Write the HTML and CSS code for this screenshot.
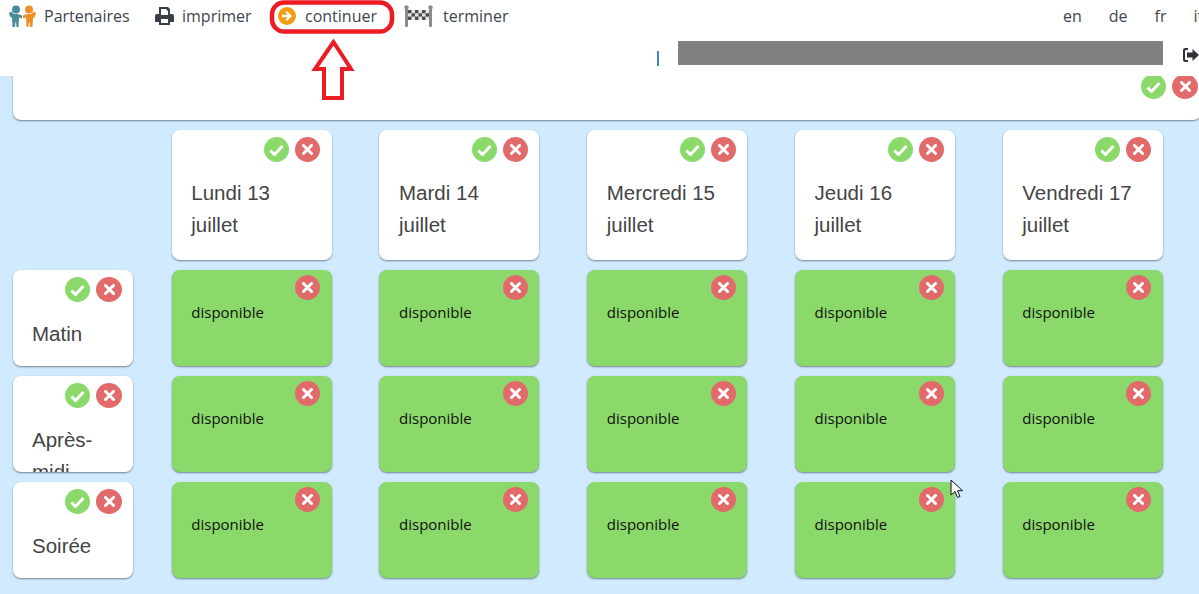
FILE: index.html
```html
<!DOCTYPE html>
<html lang="fr">
<head>
<meta charset="utf-8">
<title>Planning</title>
<link rel="stylesheet" href="styles.css">
</head>
<body>
<header class="top">
  <div class="nav-row">
    <nav class="nav">
      <a class="nav-item partners"><svg class="ico" width="27" height="22" viewBox="0 0 27 22"><g fill="#4a8d9a"><circle cx="7" cy="4.500" r="4"/><path d="M0 8l2-1.500 3 2.500h4l4 1.500v3l-3-1-.5 9.500H7.500L7 17H6.500l-.5 5H3.500L3 13 1 11.500z"/></g><g fill="#ee8f27"><circle cx="20" cy="4.500" r="4"/><path d="M27 8l-2-1.500-3 2.500h-4l-4 1.500v3l3-1 .5 9.500h2l.5-5h.5l.5 5h2.500l.5-9 2-1.500z"/></g></svg><span>Partenaires</span></a>
      <a class="nav-item print"><svg class="ico" width="19" height="18" viewBox="0 0 19 18"><path fill="#3a3f47" d="M4 0h9l2 2v5h2a2 2 0 0 1 2 2v5a1 1 0 0 1-1 1h-3v3H4v-3H1a1 1 0 0 1-1-1V9a2 2 0 0 1 2-2h2zm2 2v6h7V3.500h-1.500V2zm0 10v4h7v-4z"/></svg><span>imprimer</span></a>
      <a class="nav-item next"><svg class="ico" width="18" height="18" viewBox="0 0 18 18"><circle cx="9" cy="9" r="9" fill="#f39c12"/><path fill="#fff" d="M9 4l5 5-5 5-1.500-1.500L9.500 10.300H4V7.700h5.500L7.500 5.500z"/></svg><span>continuer</span></a>
      <a class="nav-item finish"><svg class="ico" width="29" height="22" viewBox="0 0 29 22"><g fill="#8a8a8a"><rect x="1" y="2" width="3" height="20" rx="1"/><rect x="25" y="2" width="3" height="20" rx="1"/><circle cx="2.500" cy="2.500" r="2.200"/><circle cx="26.500" cy="2.500" r="2.200"/></g><rect x="4" y="5" width="21" height="10" fill="#e6e6e6"/><g fill="#4a4a4a"><rect x="4" y="5" width="3.500" height="3.300"/><rect x="11" y="5" width="3.500" height="3.300"/><rect x="18" y="5" width="3.500" height="3.300"/><rect x="7.500" y="8.300" width="3.500" height="3.300"/><rect x="14.500" y="8.300" width="3.500" height="3.300"/><rect x="21.500" y="8.300" width="3.500" height="3.300"/><rect x="4" y="11.600" width="3.500" height="3.300"/><rect x="11" y="11.600" width="3.500" height="3.300"/><rect x="18" y="11.600" width="3.500" height="3.300"/></g></svg><span>terminer</span></a>
    </nav>
    <div class="langs"><a>en</a><a>de</a><a>fr</a><a>it</a></div>
  </div>
  <div class="user-row">
    <span class="sep"></span>
    <span class="redacted"></span>
    <svg class="logout" width="16" height="14" viewBox="0 0 16 14"><path fill="#2f3338" d="M5 0v2H3a1 1 0 0 0-1 1v8a1 1 0 0 0 1 1h2v2H2.500A2.500 2.500 0 0 1 0 11.500v-9A2.500 2.500 0 0 1 2.500 0z"/><path fill="#2f3338" d="M9.500 1L16 7l-6.500 6V9.500H4v-5h5.500z"/></svg>
  </div>
</header>

<main class="board">
  <section class="banner">
    <div class="actions"><button class="btn ok"><svg width="15" height="12" viewBox="0 0 15 12"><path d="M1.500 6.500l4 4 8-8.500" fill="none" stroke="#fff" stroke-width="3"/></svg></button><button class="btn no"><svg width="11" height="11" viewBox="0 0 11 11"><path d="M1.500 1.500l8 8m0-8l-8 8" fill="none" stroke="#fff" stroke-width="3" stroke-linecap="round"/></svg></button></div>
  </section>

  <section class="grid" id="grid"></section>
</main>

<svg class="annot" width="130" height="105" viewBox="0 0 130 105"><rect x="3" y="2.500" width="120" height="29" rx="12" fill="none" stroke="#ed1c24" stroke-width="4.500"/><path d="M64.500 42L46 69h9v29h18V69h9z" fill="none" stroke="#ed1c24" stroke-width="4"/></svg>
<svg class="cursor" width="13" height="20" viewBox="0 0 13 20"><path d="M1 1v15l4-3.500 2.500 6 2.500-1-2.500-5.800 5 0z" fill="#fff" stroke="#111" stroke-width="1"/></svg>

<script src="app.js"></script>
</body>
</html>
```
FILE: app.js
```js
const ok = '<button class="btn ok"><svg width="15" height="12" viewBox="0 0 15 12"><path d="M1.500 6.500l4 4 8-8.500" fill="none" stroke="#fff" stroke-width="3"/></svg></button>';
const no = '<button class="btn no"><svg width="11" height="11" viewBox="0 0 11 11"><path d="M1.500 1.500l8 8m0-8l-8 8" fill="none" stroke="#fff" stroke-width="3" stroke-linecap="round"/></svg></button>';
const days = ['Lundi 13 juillet', 'Mardi 14 juillet', 'Mercredi 15 juillet', 'Jeudi 16 juillet', 'Vendredi 17 juillet'];
const rows = ['Matin', 'Après-midi', 'Soirée'];
let html = '<div class="corner"></div>';
for (const d of days) {
  html += `<div class="cell"><article class="card day"><div class="actions">${ok}${no}</div><p class="title">${d}</p></article></div>`;
}
for (const r of rows) {
  html += `<div class="cell"><article class="card slot"><div class="actions">${ok}${no}</div><p class="title">${r}</p></article></div>`;
  for (let i = 0; i < days.length; i++) {
    html += `<div class="cell"><article class="card avail"><div class="actions">${no}</div><p class="state">disponible</p></article></div>`;
  }
}
document.getElementById('grid').innerHTML = html;
```
FILE: styles.css
```css
* { box-sizing: border-box; }
html, body { margin: 0; height: 100%; overflow: hidden; }
body {
  background: #d0ebff;
  font-family: "Liberation Sans", Arial, sans-serif;
  position: relative;
}

.top {
  position: relative;
  z-index: 2;
  height: 76px;
  background: #fff;
  font-family: "Open Sans", "Noto Sans", sans-serif;
  font-size: 16px;
  color: #3d4650;
}
.nav-row { display: flex; justify-content: space-between; height: 32px; }
.nav { display: flex; align-items: center; height: 31px; padding-left: 9px; }
.nav-item { display: flex; align-items: center; }
.partners { width: 146px; }
.partners .ico { margin-right: 8px; }
.print { width: 123px; }
.print .ico { margin-right: 8px; }
.next { width: 127px; }
.next .ico { margin-right: 9px; }
.finish { margin-left: -1px; }
.finish .ico { margin-right: 10px; }

.langs { display: flex; gap: 27px; width: 136px; flex: none; padding-top: 5px; }

.user-row { display: flex; align-items: flex-start; padding: 9px 0 0 657px; }
.sep { width: 2px; height: 15px; margin-top: 10px; background: #3f86c4; }
.redacted { width: 485px; height: 24px; margin-left: 19px; background: #808080; }
.logout { margin: 7px 0 0 20px; flex: none; }

.board { padding-left: 13px; }
.banner {
  height: 54px;
  margin: -10px -2px 10px 0;
  padding: 8px 3px 0 0;
  background: #fff;
  border-radius: 0 0 8px 8px;
  box-shadow: 0 1px 2px rgba(0, 0, 0, .45);
}
.banner .no { width: 26px; }

.actions { display: flex; justify-content: flex-end; gap: 6px; }
.btn {
  display: flex;
  align-items: center;
  justify-content: center;
  width: 25px;
  height: 25px;
  padding: 0;
  border: 0;
  border-radius: 50%;
}
.ok { background: #8bd96b; }
.no { background: #e26a6a; }

.grid {
  display: grid;
  grid-template-columns: 158.700px repeat(5, 207.750px);
  grid-template-rows: 130px repeat(3, 96px);
  row-gap: 10px;
}
.cell { min-width: 0; }
.card {
  height: 100%;
  border-radius: 8px;
  background: #fff;
  box-shadow: 0 1px 2px rgba(0, 0, 0, .45);
  overflow: hidden;
}
.day { width: 160px; padding: 7px 11.400px 0 19.600px; }
.slot { width: 120px; padding: 7px 11px 0 19px; }
.slot .no { width: 26px; }
.avail { width: 160px; padding: 5px 11.400px 0 19.600px; background: #8bd96b; }
.title {
  margin: 15px 0 0;
  padding-right: 8px;
  font-size: 20.500px;
  line-height: 32px;
  color: #444;
}
.slot .title { margin-top: 16px; padding-right: 0; }
.state {
  margin: 2px 0 0;
  font-family: "Open Sans", "Noto Sans", sans-serif;
  font-size: 15px;
  line-height: 20px;
  color: #111;
}

.annot { position: absolute; left: 269px; top: 0; z-index: 3; }
.cursor { position: absolute; left: 950px; top: 479px; z-index: 3; }
```
